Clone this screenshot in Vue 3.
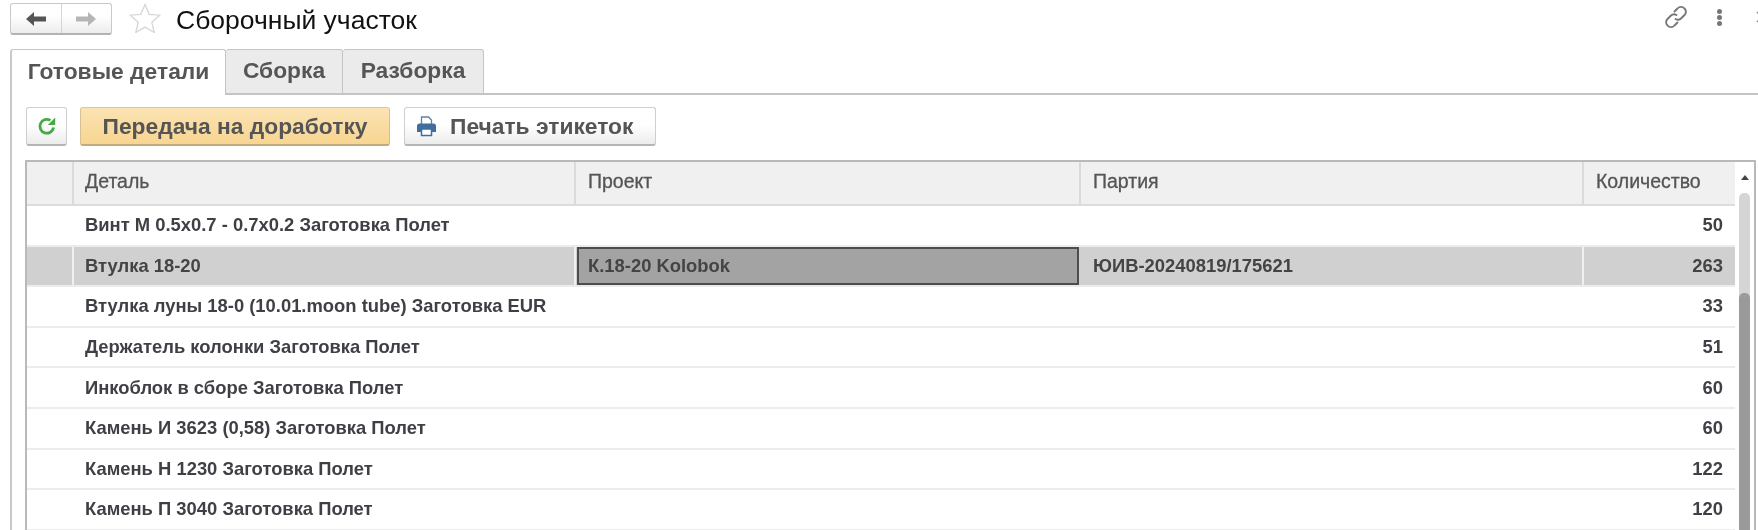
<script setup>
const rows = [
  { name: 'Винт М 0.5x0.7 - 0.7x0.2 Заготовка Полет', project: '', batch: '', qty: 50 },
  { name: 'Втулка 18-20', project: 'К.18-20 Kolobok', batch: 'ЮИВ-20240819/175621', qty: 263, current: true },
  { name: 'Втулка луны 18-0 (10.01.moon tube) Заготовка EUR', project: '', batch: '', qty: 33 },
  { name: 'Держатель колонки Заготовка Полет', project: '', batch: '', qty: 51 },
  { name: 'Инкоблок в сборе Заготовка Полет', project: '', batch: '', qty: 60 },
  { name: 'Камень И 3623 (0,58) Заготовка Полет', project: '', batch: '', qty: 60 },
  { name: 'Камень Н 1230 Заготовка Полет', project: '', batch: '', qty: 122 },
  { name: 'Камень П 3040 Заготовка Полет', project: '', batch: '', qty: 120 }
]
</script>

<template>
  <div class="page">
    <header class="top">
      <div class="nav">
        <button class="nav-btn">
          <svg width="20" height="16" viewBox="0 0 20 16"><path d="M0 8 8 1v4.500h12v5H8V15z" fill="#555"/></svg>
        </button>
        <button class="nav-btn">
          <svg width="20" height="16" viewBox="0 0 20 16"><path d="M20 8 12 1v4.500H0v5h12V15z" fill="#b5b5b5"/></svg>
        </button>
      </div>
      <svg class="star" width="32" height="30" viewBox="0 0 32 30">
        <path d="M16 1.500l4.200 9.800 10.600.9-8 7 2.400 10.300L16 24.100l-9.200 5.400 2.400-10.300-8-7 10.600-.9z" fill="#fff" stroke="#d3d7db" stroke-width="1.300"/>
      </svg>
      <h1 class="title">Сборочный участок</h1>
      <div class="top-actions">
        <svg width="24" height="24" viewBox="0 0 24 24" fill="none" stroke="#777" stroke-width="1.900" stroke-linecap="round">
          <path d="M10.500 6.500l3-3a4.500 4.500 0 0 1 7 0 4.500 4.500 0 0 1 0 6.500l-3.500 3.500a4.500 4.500 0 0 1-5.500.5"/>
          <path d="M13.500 17.500l-3 3a4.500 4.500 0 0 1-7 0 4.500 4.500 0 0 1 0-6.500l3.500-3.500a4.500 4.500 0 0 1 5.500-.5"/>
        </svg>
        <span class="dots"><i></i><i></i><i></i></span>
        <svg class="close" width="12" height="12" viewBox="0 0 12 12"><path d="M1 1l10 10M11 1L1 11" stroke="#888" stroke-width="1.500"/></svg>
      </div>
    </header>

    <nav class="tabs">
      <div class="tab active">Готовые детали</div>
      <div class="tab t2">Сборка</div>
      <div class="tab t3">Разборка</div>
      <div class="tabs-rest"></div>
    </nav>

    <section class="panel">
      <div class="toolbar">
        <button class="btn refresh">
          <svg width="20" height="20" viewBox="0 0 20 20" fill="none">
            <path d="M16.600 11.500A6.900 6.900 0 1 1 13.400 4.400" stroke="#45ab45" stroke-width="2.800"/>
            <path d="M10.800 9h7.400V1.600z" fill="#45ab45"/>
          </svg>
        </button>
        <button class="btn primary">Передача на доработку</button>
        <button class="btn print">
          <svg width="21" height="21" viewBox="0 0 21 21">
            <path d="M5.500 1h7l3 3v5h-10z" fill="#fff" stroke="#5f7f9f" stroke-width="1.300"/>
            <path d="M1 10q0-2.500 2.500-2.500h14q2.500 0 2.500 2.500v6h-4v-3H5v3H1z" fill="#3f6f9f"/>
            <rect x="5.500" y="13" width="10" height="6.500" fill="#fff" stroke="#3f6f9f" stroke-width="1.500"/>
          </svg>
          <span>Печать этикеток</span>
        </button>
      </div>

      <div class="table">
        <div class="table-main">
          <div class="head">
            <div class="cell mark"></div>
            <div class="cell c-name">Деталь</div>
            <div class="cell c-project">Проект</div>
            <div class="cell c-batch">Партия</div>
            <div class="cell c-qty">Количество</div>
          </div>
          <div v-for="row in rows" :key="row.name" class="row" :class="{ current: row.current }">
            <div class="cell mark"></div>
            <div class="cell c-name">{{ row.name }}</div>
            <div class="cell c-project" :class="{ focused: row.current }">{{ row.project }}</div>
            <div class="cell c-batch">{{ row.batch }}</div>
            <div class="cell c-qty num">{{ row.qty }}</div>
          </div>
        </div>
        <div class="scroll">
          <div class="arrow"></div>
          <div class="track"></div>
          <div class="thumb"></div>
        </div>
      </div>
    </section>
  </div>
</template>

<style scoped>
.page {
  width: 1758px;
  height: 530px;
  overflow: hidden;
  background: #fff;
  font-family: "Liberation Sans", Arial, sans-serif;
  color: #4a4a4a;
  filter: blur(0.5px);
}

.top {
  display: flex;
  align-items: center;
  height: 36px;
  padding: 2px 0 0 10px;
  box-sizing: border-box;
}

.nav {
  display: flex;
  width: 102px;
  height: 32px;
  box-sizing: border-box;
  border: 1px solid #c9c9c9;
  border-bottom: 2px solid #b3b3b3;
  border-radius: 3px;
  background: linear-gradient(#fff 40%, #ececec);
}

.nav-btn {
  flex: 1;
  display: flex;
  align-items: center;
  justify-content: center;
  padding: 0;
  background: none;
  border: 0;
}

.nav-btn + .nav-btn {
  border-left: 1px solid #d5d5d5;
}

.star {
  margin: 0 0 2px 17px;
}

.title {
  margin: 2px 0 0 15px;
  font-size: 26.5px;
  font-weight: 400;
  color: #111;
}

.top-actions {
  margin: 0 -10px 4px auto;
  display: flex;
  align-items: center;
  color: #777;
}

.dots {
  display: flex;
  flex-direction: column;
  gap: 1px;
  margin: 0 34px 0 29px;
}

.dots i {
  width: 5px;
  height: 5px;
  border-radius: 50%;
  background: #777;
}

.close {
  display: block;
}

.tabs {
  display: flex;
  height: 59px;
  padding: 13px 0 0 10px;
  box-sizing: border-box;
}

.tab {
  display: flex;
  align-items: center;
  justify-content: center;
  box-sizing: border-box;
  padding-bottom: 2px;
  font-size: 22.8px;
  font-weight: 700;
  color: #555;
  background: #ebebeb;
  border: 1px solid #c4c4c4;
  border-left: 0;
  border-bottom: 2px solid #c4c4c4;
  border-radius: 3px 3px 0 0;
}

.tab.active {
  width: 216px;
  background: #fff;
  border-left: 2px solid #c8c8c8;
  border-bottom: 0;
}

.t2 {
  width: 117px;
}

.t3 {
  width: 141px;
}

.tabs-rest {
  flex: 1;
  border-bottom: 2px solid #c4c4c4;
}

.panel {
  height: 435px;
  margin-left: 10px;
  padding: 12px 0 0 15px;
  box-sizing: border-box;
  border-left: 2px solid #c8c8c8;
}

.toolbar {
  display: flex;
  gap: 13px;
  height: 39px;
  margin-left: -1px;
}

.btn {
  display: flex;
  align-items: center;
  justify-content: center;
  box-sizing: border-box;
  height: 39px;
  padding: 0;
  font-family: inherit;
  font-size: 22.8px;
  font-weight: 700;
  color: #555;
  border: 1px solid #cfcfcf;
  border-bottom: 2px solid #b5b5b5;
  border-radius: 3px;
  background: linear-gradient(#fff 45%, #ececec);
}

.refresh {
  width: 41px;
}

.primary {
  width: 310px;
  background: linear-gradient(#fbe3b3, #f8d591);
  border-color: #dcc79c #d6c196 #c4aa7a;
}

.print {
  width: 252px;
  margin-left: 1px;
  gap: 13px;
  justify-content: flex-start;
  padding-left: 11px;
}

.table {
  display: flex;
  width: 1731px;
  height: 400px;
  margin: 14px 0 0 -2px;
  box-sizing: border-box;
  border: 2px solid #b9b9b9;
  border-bottom: 0;
  border-radius: 1px;
  overflow: hidden;
}

.table-main {
  width: 1708px;
  flex: none;
}

.head,
.row {
  display: flex;
}

.head {
  height: 44px;
  box-sizing: border-box;
  background: #f0f0f0;
  border-bottom: 2px solid #dcdcdc;
  font-size: 19.5px;
  color: #555;
  -webkit-text-stroke: 0.3px #555;
}

.head .cell {
  padding-bottom: 3px;
  border-right: 2px solid #dadada;
}

.head .c-qty {
  border-right: 0;
}

.row {
  height: 40.6px;
  box-sizing: border-box;
  border-bottom: 2px solid #ececec;
  font-size: 18.4px;
  font-weight: 700;
  color: #3f3f46;
}

.row.current {
  background: #d0d0d0;
  color: #444;
}

.row.current .cell {
  border-right: 2px solid #f0f0f0;
}

.row.current .c-qty {
  border-right: 0;
}

.cell {
  display: flex;
  align-items: center;
  flex: none;
  box-sizing: border-box;
  padding-left: 12px;
  white-space: nowrap;
}

.mark {
  width: 47px;
  padding: 0;
}

.c-name {
  width: 502px;
  padding-left: 11px;
}

.c-project {
  width: 505px;
}

.c-batch {
  width: 503px;
}

.c-qty {
  width: 151px;
}

.row .num {
  justify-content: flex-end;
  padding: 0 12px 0 0;
}

.row.current .focused {
  width: 502px;
  margin: 0 2px 0 1px;
  padding-left: 9px;
  background: #a3a3a3;
  border: 2px solid #4d4d4d;
}

.scroll {
  position: relative;
  flex: 1;
}

.arrow {
  position: absolute;
  top: 13px;
  left: 6px;
  border: 4px solid transparent;
  border-top: 0;
  border-bottom: 5px solid #444;
}

.track {
  position: absolute;
  top: 31px;
  left: 4px;
  width: 11px;
  height: 120px;
  border-radius: 5px 5px 0 0;
  background: #d5d5d5;
}

.thumb {
  position: absolute;
  top: 131px;
  left: 4px;
  width: 11px;
  height: 300px;
  border-radius: 5px 5px 0 0;
  background: #9a9a9a;
}
</style>
